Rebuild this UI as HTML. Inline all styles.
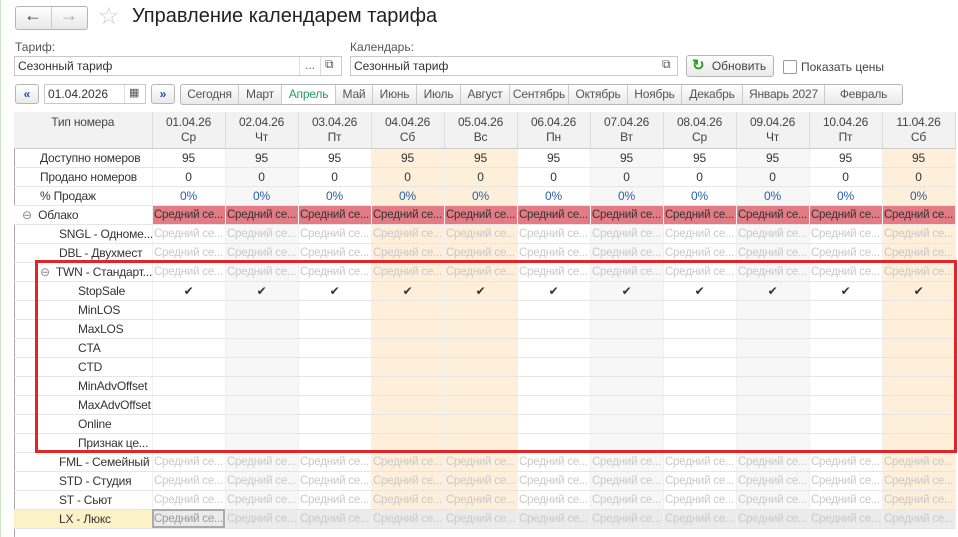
<!DOCTYPE html><html><head><meta charset="utf-8"><style>
body{margin:0;width:958px;height:537px;overflow:hidden;background:#fff;font-family:"Liberation Sans",sans-serif;font-size:12px;color:#333;position:relative}
.a{position:absolute}
.btn{position:absolute;border:1px solid #b5b5b5;border-radius:3px;background:linear-gradient(#fff,#e9e9e9);box-sizing:border-box;text-align:center;color:#444}
.inp{position:absolute;border:1px solid #c8c8c8;background:#fff;box-sizing:border-box;padding-left:3px;line-height:18px;color:#333}
table{position:absolute;left:14px;top:112px;border-collapse:collapse;table-layout:fixed;width:941px}
td{height:18px;padding:0;border-bottom:1px solid #e6e6e6;border-right:1px solid #f0f0f0;white-space:nowrap;overflow:hidden;text-align:center;line-height:18px;letter-spacing:-0.2px}
td:first-child{text-align:left}
tr.h td{height:36px;background:#f2f2f2;line-height:15px;color:#444;border-right:1px solid #ddd;border-bottom:1px solid #ccc;vertical-align:top;padding-top:3px;box-sizing:border-box}
.g{background:#f7f7f7}.w{background:#fdefda}
.p td{background:#e37b85;color:#333}
.s td,.p td{font-size:11.5px}
.s td:first-child,.p td:first-child{font-size:12px}
.s td{color:#c9c9c9}
.pc td{color:#2a5fa8}
.lx td{background:#ebebeb}
</style></head><body>
<div class="a" style="left:0;top:0;width:1px;height:537px;background:#cfe3c8"></div>
<div class="btn" style="left:15px;top:6px;width:73px;height:24px"></div>
<div class="a" style="left:51px;top:7px;width:1px;height:22px;background:#ccc"></div>
<div class="a" style="left:24px;top:5px;font-size:18px;color:#444">&#8592;</div>
<div class="a" style="left:60px;top:5px;font-size:18px;color:#aaa">&#8594;</div>
<div class="a" style="left:98px;top:2px;font-size:24px;color:#ccc">&#9734;</div>
<div class="a" style="left:132px;top:5px;font-size:20px;color:#222">Управление календарем тарифа</div>
<div class="a" style="left:15px;top:40px;color:#555">Тариф:</div>
<div class="a" style="left:350px;top:40px;color:#555">Календарь:</div>
<div class="inp" style="left:14px;top:56px;width:328px;height:20px">Сезонный тариф</div>
<div class="a" style="left:299px;top:57px;width:1px;height:18px;background:#ddd"></div>
<div class="a" style="left:320px;top:57px;width:1px;height:18px;background:#ddd"></div>
<div class="a" style="left:305px;top:58px;color:#666">...</div>
<div class="a" style="left:325px;top:57px;color:#555">&#10697;</div>
<div class="inp" style="left:350px;top:56px;width:328px;height:20px">Сезонный тариф</div>
<div class="a" style="left:662px;top:57px;color:#555">&#10697;</div>
<div class="btn" style="left:686px;top:55px;width:88px;height:22px;line-height:20px;padding-left:18px">Обновить</div>
<div class="a" style="left:692px;top:56px;color:#2a9a2a;font-size:15px;font-weight:bold">&#8635;</div>
<div class="a" style="left:783px;top:60px;width:12px;height:12px;border:1px solid #999;border-radius:2px;background:#fff"></div>
<div class="a" style="left:801px;top:60px;color:#444">Показать цены</div>
<div class="btn" style="left:15px;top:84px;width:24px;height:20px;color:#1e50b4;font-weight:bold;line-height:18px">&#171;</div>
<div class="inp" style="left:44px;top:84px;width:102px;height:20px">01.04.2026</div>
<div class="a" style="left:124px;top:85px;width:1px;height:18px;background:#ddd"></div>
<div class="a" style="left:129px;top:86px;font-size:11px;color:#555">&#9638;</div>
<div class="btn" style="left:151px;top:84px;width:24px;height:20px;color:#1e50b4;font-weight:bold;line-height:18px">&#187;</div>
<div class="btn" style="left:180px;top:84px;width:723px;height:21px;display:flex;line-height:19px;color:#555;letter-spacing:-0.2px">
<span style="width:57px;border-right:1px solid #ccc">Сегодня</span><span style="width:42px;border-right:1px solid #ccc">Март</span><span style="width:53px;border-right:1px solid #ccc;color:#2a9a5a;background:#fff">Апрель</span><span style="width:36px;border-right:1px solid #ccc">Май</span><span style="width:43px;border-right:1px solid #ccc">Июнь</span><span style="width:43px;border-right:1px solid #ccc">Июль</span><span style="width:48px;border-right:1px solid #ccc">Август</span><span style="width:58px;border-right:1px solid #ccc">Сентябрь</span><span style="width:58px;border-right:1px solid #ccc">Октябрь</span><span style="width:53px;border-right:1px solid #ccc">Ноябрь</span><span style="width:60px;border-right:1px solid #ccc">Декабрь</span><span style="width:81px;border-right:1px solid #ccc">Январь 2027</span><span style="flex:1">Февраль</span></div>
<div class="a" style="left:14px;top:112px;width:1px;height:425px;background:#aaa"></div>
<table>
<colgroup><col style="width:138px"><col span="11" style="width:73px"></colgroup>
<tr class="h"><td style="text-align:center">Тип номера</td><td>01.04.26<br>Ср</td><td>02.04.26<br>Чт</td><td>03.04.26<br>Пт</td><td>04.04.26<br>Сб</td><td>05.04.26<br>Вс</td><td>06.04.26<br>Пн</td><td>07.04.26<br>Вт</td><td>08.04.26<br>Ср</td><td>09.04.26<br>Чт</td><td>10.04.26<br>Пт</td><td>11.04.26<br>Сб</td></tr>
<tr><td style="padding-left:26px">Доступно номеров</td><td>95</td><td class="g">95</td><td>95</td><td class="w">95</td><td class="w">95</td><td>95</td><td class="g">95</td><td>95</td><td class="g">95</td><td>95</td><td class="w">95</td></tr>
<tr><td style="padding-left:26px">Продано номеров</td><td>0</td><td class="g">0</td><td>0</td><td class="w">0</td><td class="w">0</td><td>0</td><td class="g">0</td><td>0</td><td class="g">0</td><td>0</td><td class="w">0</td></tr>
<tr class="pc"><td style="padding-left:26px;color:#333">% Продаж</td><td>0%</td><td class="g">0%</td><td>0%</td><td class="w">0%</td><td class="w">0%</td><td>0%</td><td class="g">0%</td><td>0%</td><td class="g">0%</td><td>0%</td><td class="w">0%</td></tr>
<tr class="p"><td style="background:#fff;padding-left:8px"><span style="color:#888">&#8854;</span>&nbsp; Облако</td><td>Средний се...</td><td>Средний се...</td><td>Средний се...</td><td>Средний се...</td><td>Средний се...</td><td>Средний се...</td><td>Средний се...</td><td>Средний се...</td><td>Средний се...</td><td>Средний се...</td><td>Средний се...</td></tr>
<tr class="s"><td style="padding-left:45px;color:#333">SNGL - Одноме...</td><td>Средний се...</td><td class="g">Средний се...</td><td>Средний се...</td><td class="w">Средний се...</td><td class="w">Средний се...</td><td>Средний се...</td><td class="g">Средний се...</td><td>Средний се...</td><td class="g">Средний се...</td><td>Средний се...</td><td class="w">Средний се...</td></tr>
<tr class="s"><td style="padding-left:45px;color:#333">DBL - Двухмест</td><td>Средний се...</td><td class="g">Средний се...</td><td>Средний се...</td><td class="w">Средний се...</td><td class="w">Средний се...</td><td>Средний се...</td><td class="g">Средний се...</td><td>Средний се...</td><td class="g">Средний се...</td><td>Средний се...</td><td class="w">Средний се...</td></tr>
<tr class="s"><td style="padding-left:26px;color:#333"><span style="color:#888">&#8854;</span>&nbsp; TWN - Стандарт...</td><td>Средний се...</td><td class="g">Средний се...</td><td>Средний се...</td><td class="w">Средний се...</td><td class="w">Средний се...</td><td>Средний се...</td><td class="g">Средний се...</td><td>Средний се...</td><td class="g">Средний се...</td><td>Средний се...</td><td class="w">Средний се...</td></tr>
<tr><td style="padding-left:64px">StopSale</td><td>&#10004;</td><td class="g">&#10004;</td><td>&#10004;</td><td class="w">&#10004;</td><td class="w">&#10004;</td><td>&#10004;</td><td class="g">&#10004;</td><td>&#10004;</td><td class="g">&#10004;</td><td>&#10004;</td><td class="w">&#10004;</td></tr>
<tr><td style="padding-left:64px">MinLOS</td><td></td><td class="g"></td><td></td><td class="w"></td><td class="w"></td><td></td><td class="g"></td><td></td><td class="g"></td><td></td><td class="w"></td></tr>
<tr><td style="padding-left:64px">MaxLOS</td><td></td><td class="g"></td><td></td><td class="w"></td><td class="w"></td><td></td><td class="g"></td><td></td><td class="g"></td><td></td><td class="w"></td></tr>
<tr><td style="padding-left:64px">CTA</td><td></td><td class="g"></td><td></td><td class="w"></td><td class="w"></td><td></td><td class="g"></td><td></td><td class="g"></td><td></td><td class="w"></td></tr>
<tr><td style="padding-left:64px">CTD</td><td></td><td class="g"></td><td></td><td class="w"></td><td class="w"></td><td></td><td class="g"></td><td></td><td class="g"></td><td></td><td class="w"></td></tr>
<tr><td style="padding-left:64px">MinAdvOffset</td><td></td><td class="g"></td><td></td><td class="w"></td><td class="w"></td><td></td><td class="g"></td><td></td><td class="g"></td><td></td><td class="w"></td></tr>
<tr><td style="padding-left:64px">MaxAdvOffset</td><td></td><td class="g"></td><td></td><td class="w"></td><td class="w"></td><td></td><td class="g"></td><td></td><td class="g"></td><td></td><td class="w"></td></tr>
<tr><td style="padding-left:64px">Online</td><td></td><td class="g"></td><td></td><td class="w"></td><td class="w"></td><td></td><td class="g"></td><td></td><td class="g"></td><td></td><td class="w"></td></tr>
<tr><td style="padding-left:64px">Признак це...</td><td></td><td class="g"></td><td></td><td class="w"></td><td class="w"></td><td></td><td class="g"></td><td></td><td class="g"></td><td></td><td class="w"></td></tr>
<tr class="s"><td style="padding-left:45px;color:#333">FML - Семейный</td><td>Средний се...</td><td class="g">Средний се...</td><td>Средний се...</td><td class="w">Средний се...</td><td class="w">Средний се...</td><td>Средний се...</td><td class="g">Средний се...</td><td>Средний се...</td><td class="g">Средний се...</td><td>Средний се...</td><td class="w">Средний се...</td></tr>
<tr class="s"><td style="padding-left:45px;color:#333">STD - Студия</td><td>Средний се...</td><td class="g">Средний се...</td><td>Средний се...</td><td class="w">Средний се...</td><td class="w">Средний се...</td><td>Средний се...</td><td class="g">Средний се...</td><td>Средний се...</td><td class="g">Средний се...</td><td>Средний се...</td><td class="w">Средний се...</td></tr>
<tr class="s"><td style="padding-left:45px;color:#333">ST - Сьют</td><td>Средний се...</td><td class="g">Средний се...</td><td>Средний се...</td><td class="w">Средний се...</td><td class="w">Средний се...</td><td>Средний се...</td><td class="g">Средний се...</td><td>Средний се...</td><td class="g">Средний се...</td><td>Средний се...</td><td class="w">Средний се...</td></tr>
<tr class="s lx"><td style="padding-left:45px;color:#333;background:#fdf1c8">LX - Люкс</td><td style="outline:2px solid #aaa;outline-offset:-2px;color:#999">Средний се...</td><td>Средний се...</td><td>Средний се...</td><td>Средний се...</td><td>Средний се...</td><td>Средний се...</td><td>Средний се...</td><td>Средний се...</td><td>Средний се...</td><td>Средний се...</td><td>Средний се...</td></tr>
</table>
<div class="a" style="left:35px;top:260px;height:193px;box-sizing:border-box;border:3px solid #e0262b;width:922px"></div>
</body></html>
